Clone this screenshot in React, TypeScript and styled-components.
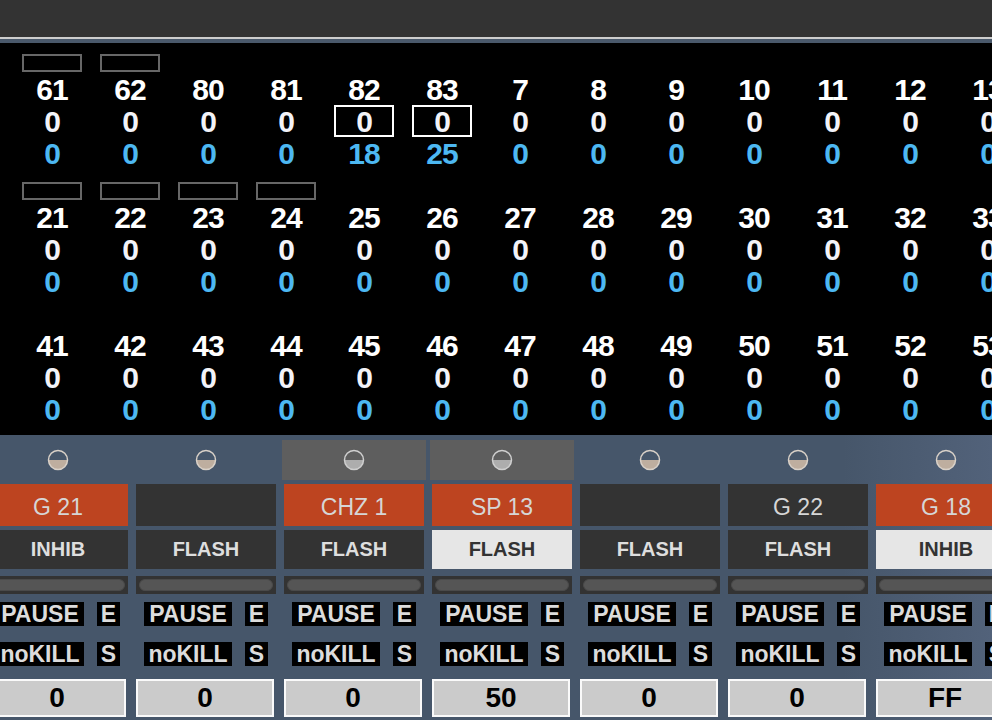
import React from "react"
import styled, { createGlobalStyle } from "styled-components"

const GlobalStyle = createGlobalStyle`
    html, body {
        margin: 0;
        padding: 0;
        background: #000;
        font-family: "Liberation Sans", Arial, Helvetica, sans-serif;
        overflow: hidden;
    }
`

const Page = styled.div`
    width: 992px;
    height: 720px;
    display: flex;
    flex-direction: column;
    overflow: hidden;
`

const TopBar = styled.div`
    height: 37px;
    background: #333333;
    flex: none;
`

const Divider = styled.div`
    height: 4px;
    border-top: 2px solid #cdcdcd;
    background: #4a596b;
    flex: none;
`

const Grid = styled.section`
    height: 392px;
    flex: none;
    background: #000;
    padding: 11px 0 0 13px;
    box-sizing: border-box;
    display: flex;
    flex-direction: column;
    gap: 13px;
    overflow: hidden;
`

const GridRow = styled.div`
    display: flex;
    flex-wrap: nowrap;
`

const Cell = styled.div`
    width: 78px;
    flex: none;
    display: flex;
    flex-direction: column;
    align-items: center;
`

const Tag = styled.div<{ $visible: boolean }>`
    width: 60px;
    height: 18px;
    box-sizing: border-box;
    border: 2px solid ${p => (p.$visible ? "#676767" : "transparent")};
    margin-bottom: 1px;
`

const Line = styled.div<{ $color: string; $boxed?: boolean }>`
    width: 60px;
    height: 32px;
    line-height: 29px;
    box-sizing: border-box;
    border: 2px solid ${p => (p.$boxed ? "#fff" : "transparent")};
    text-align: center;
    font-size: 30px;
    font-weight: 700;
    letter-spacing: -1px;
    color: ${p => p.$color};
`

const Panel = styled.section`
    flex: 1;
    background: linear-gradient(90deg, #46566a 0%, #46566a 85%, #52627a 100%);
    padding-top: 5px;
    overflow: hidden;
`

const Strips = styled.div`
    display: flex;
    gap: 4px;
    margin-left: -14px;
`

const Strip = styled.div`
    width: 144px;
    flex: none;
    display: flex;
    flex-direction: column;
`

const Header = styled.div<{ $selected: boolean }>`
    height: 40px;
    background: ${p => (p.$selected ? "#5e5e5e" : "transparent")};
    display: flex;
    align-items: center;
    justify-content: center;
`

const Name = styled.div<{ $active: boolean }>`
    margin: 4px 2px 0;
    height: 42px;
    padding-top: 5px;
    box-sizing: border-box;
    background: ${p => (p.$active ? "#bd4420" : "#333333")};
    color: #d6d6d6;
    font-size: 23px;
    display: flex;
    align-items: center;
    justify-content: center;
`

const Mode = styled.div<{ $on: boolean }>`
    margin: 4px 2px 0;
    height: 39px;
    background: ${p => (p.$on ? "#e6e6e6" : "#333333")};
    color: ${p => (p.$on ? "#333" : "#dedede")};
    font-size: 20px;
    font-weight: 700;
    display: flex;
    align-items: center;
    justify-content: center;
`

const Track = styled.div`
    margin: 7px 2px 0;
    height: 18px;
    background: #333333;
    padding: 3px 3px;
    box-sizing: border-box;
`

const Pill = styled.div`
    height: 12px;
    border-radius: 6px;
    background: #555555;
    border: 1px solid #4a4a4a;
    box-sizing: border-box;
`

const ToggleRow = styled.div<{ $top: number }>`
    margin-top: ${p => p.$top}px;
    padding: 0 10px;
    display: flex;
    justify-content: space-between;
`

const Label = styled.span<{ $w: number }>`
    width: ${p => p.$w}px;
    height: 24px;
    background: #000;
    color: #dcdcdc;
    font-size: 23px;
    font-weight: 700;
    line-height: 24px;
    text-align: center;
    overflow: hidden;
    white-space: nowrap;
`

const Value = styled.div`
    margin: 13px 4px 0 2px;
    height: 38px;
    box-sizing: border-box;
    border: 2px solid #fafafa;
    background: #cbcbcb;
    color: #000;
    font-size: 28px;
    font-weight: 700;
    display: flex;
    align-items: center;
    justify-content: center;
`

const HalfDot = ({ selected }: { selected: boolean }) => (
    <svg width="22" height="22" viewBox="0 0 22 22">
        <path d="M1.5 11 A9.5 9.5 0 0 0 20.5 11 Z" fill={selected ? "#adadad" : "#beae9f"} />
        <circle cx="11" cy="11" r="9.5" fill="none" stroke={selected ? "#cfcfcf" : "#d9d1c8"} strokeWidth="1.5" />
    </svg>
)

type CellData = { id: number; val: number; out: number; tag?: boolean; boxed?: boolean }

const range = (a: number, n: number) => Array.from({ length: n }, (_, i) => a + i)

const rows: CellData[][] = [
    [
        { id: 61, val: 0, out: 0, tag: true },
        { id: 62, val: 0, out: 0, tag: true },
        { id: 80, val: 0, out: 0 },
        { id: 81, val: 0, out: 0 },
        { id: 82, val: 0, out: 18, boxed: true },
        { id: 83, val: 0, out: 25, boxed: true },
        ...range(7, 8).map(id => ({ id, val: 0, out: 0 })),
    ],
    range(21, 14).map(id => ({ id, val: 0, out: 0, tag: id <= 24 })),
    range(41, 14).map(id => ({ id, val: 0, out: 0 })),
]

const strips = [
    { name: "G 21", active: true, mode: "INHIB", on: false, selected: false, value: "0" },
    { name: "", active: false, mode: "FLASH", on: false, selected: false, value: "0" },
    { name: "CHZ 1", active: true, mode: "FLASH", on: false, selected: true, value: "0" },
    { name: "SP 13", active: true, mode: "FLASH", on: true, selected: true, value: "50" },
    { name: "", active: false, mode: "FLASH", on: false, selected: false, value: "0" },
    { name: "G 22", active: false, mode: "FLASH", on: false, selected: false, value: "0" },
    { name: "G 18", active: true, mode: "INHIB", on: true, selected: false, value: "FF" },
]

const App = () => (
    <Page>
        <GlobalStyle />
        <TopBar />
        <Divider />
        <Grid>
            {rows.map((row, r) => (
                <GridRow key={r}>
                    {row.map(c => (
                        <Cell key={c.id}>
                            <Tag $visible={!!c.tag} />
                            <Line $color="#ffffff">{c.id}</Line>
                            <Line $color="#f3f3f8" $boxed={c.boxed}>{c.val}</Line>
                            <Line $color="#4db8f2">{c.out}</Line>
                        </Cell>
                    ))}
                </GridRow>
            ))}
        </Grid>
        <Panel>
            <Strips>
                {strips.map((s, i) => (
                    <Strip key={i}>
                        <Header $selected={s.selected}>
                            <HalfDot selected={s.selected} />
                        </Header>
                        <Name $active={s.active}>{s.name}</Name>
                        <Mode $on={s.on}>{s.mode}</Mode>
                        <Track>
                            <Pill />
                        </Track>
                        <ToggleRow $top={8}>
                            <Label $w={88}>PAUSE</Label>
                            <Label $w={23}>E</Label>
                        </ToggleRow>
                        <ToggleRow $top={16}>
                            <Label $w={88}>noKILL</Label>
                            <Label $w={23}>S</Label>
                        </ToggleRow>
                        <Value>{s.value}</Value>
                    </Strip>
                ))}
            </Strips>
        </Panel>
    </Page>
)

export default App
